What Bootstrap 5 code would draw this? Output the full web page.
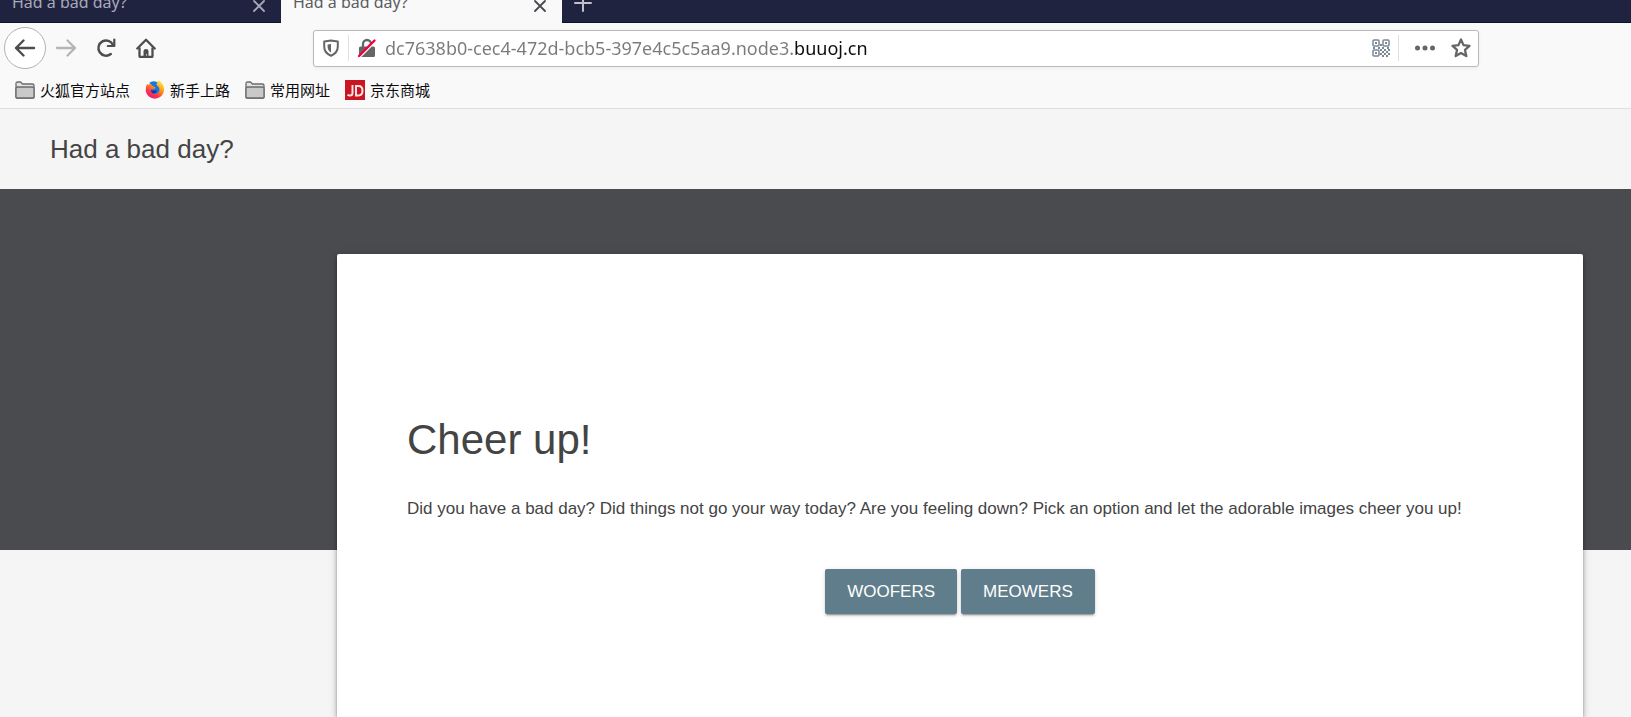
<!DOCTYPE html>
<html lang="en">
<head>
<meta charset="utf-8">
<meta name="viewport" content="width=device-width, initial-scale=1">
<title>Had a bad day?</title>
<link href="https://cdn.jsdelivr.net/npm/bootstrap@5.3.0/dist/css/bootstrap.min.css" rel="stylesheet">
<style>
  body { background: #f5f5f5; font-family: "Liberation Sans", Arial, sans-serif; color: #444; }
  svg { display: block; flex: none; }
  .chrome { background: #f9f9fa; border-bottom: 1px solid #e0e0e1; font-family: "Noto Sans", "Noto Sans CJK SC", sans-serif; }

  /* Tab strip */
  .tabstrip { height: 23px; background: #202340; }
  .tab { width: 281px; padding: 0 16px 10px 12px; color: #a8a9b8; font-size: 16px; line-height: 20px; align-items: flex-end; border-bottom: 1px solid #0f1126; }
  .tab.current { background: #f9f9fa; color: #5c5c61; border-color: #f9f9fa; }
  .tab.current .tab-x { color: #4a4a4f; }
  .tab-x { color: #b8b9c6; }
  .plain { border: 0; background: none; padding: 0; color: inherit; }
  .newtab { color: #c0c1cc; padding: 0 12px 10px; border-bottom: 1px solid #0f1126; align-items: flex-end; }

  /* Toolbar */
  .toolbar { height: 50px; padding: 0 152px 0 4px; }
  .navbtn { width: 40px; height: 40px; color: #4d4d50; }
  .navbtn.back { width: 42px; height: 42px; border: 1px solid #b3b3b5; border-radius: 50%; background: #fff; }
  .navbtn:disabled { color: #b5b5b6; }
  .urlbar { margin-left: 147px; height: 37px; background: #fff; border: 1px solid #b9b9bb; border-radius: 3px; box-shadow: 0 1px 4px rgba(0,0,0,.06); padding: 0 7px 0 8px; color: #666668; }
  .rule { width: 1px; height: 26px; background: #e0e0e2; }
  .address { --host: 409px; min-width: 0; border: 0; outline: 0; padding: 0; height: 33px; font-size: 18px; color: #7a7a7c;
    background: linear-gradient(to right, #7a7a7c var(--host), #0c0c0d var(--host)); background-clip: text; -webkit-background-clip: text; -webkit-text-fill-color: transparent; }

  /* Bookmarks */
  .bookmarks { height: 35px; padding: 0 15px 2px; gap: 15px; font-size: 15px; line-height: 20px; }
  .bookmarks a { color: #0c0c0d; gap: 5px; }

  /* Page */
  .masthead { height: 80px; padding: 0 50px; font-size: 26px; line-height: 32px; }
  .ribbon { height: 361px; background: #4a4b4f; flex: none; }
  .panel { margin: -296px 48px 0 337px; padding: 156px 70px 80px; background: #fff; border-radius: 2px 2px 0 0;
    box-shadow: 0 2px 2px rgba(0,0,0,.14), 0 3px 4px rgba(0,0,0,.2), 0 1px 8px rgba(0,0,0,.22); }
  .panel h1 { font-size: 42px; line-height: 60px; font-weight: 400; margin-bottom: 24px; }
  .panel p { font-size: 17px; line-height: 30px; margin-bottom: 45px; }
  .btn-slate { --bs-btn-color: #fff; --bs-btn-bg: #607d8b; --bs-btn-hover-color: #fff; --bs-btn-hover-bg: #546e7a; --bs-btn-active-bg: #455a64; --bs-btn-active-color: #fff;
    --bs-btn-padding-x: 22px; --bs-btn-padding-y: 0; --bs-btn-font-size: 17px; --bs-btn-line-height: 45px; --bs-btn-border-width: 0; --bs-btn-border-radius: 2px;
    box-shadow: 0 2px 2px rgba(0,0,0,.14), 0 3px 1px -2px rgba(0,0,0,.2), 0 1px 5px rgba(0,0,0,.12); }
</style>
</head>
<body class="d-flex flex-column min-vh-100">

<svg class="d-none" aria-hidden="true">
  <symbol id="cross" viewBox="0 0 12 12"><path d="M1 1l10 10M11 1L1 11" fill="none" stroke="currentColor" stroke-width="1.8" stroke-linecap="round"/></symbol>
  <symbol id="folder" viewBox="0 0 20 18">
    <path d="M1 2.500Q1 1 2.500 1H5.500l2 2h10Q19 3 19 4.500V16q0 1-1 1H2q-1 0-1-1z" fill="#e3e3e4" stroke="#6b6b6b" stroke-width="1.300"/>
    <path d="M1 7.500Q1 6 2.500 6h15Q19 6 19 7.500V16q0 1-1 1H2q-1 0-1-1z" fill="#c9c9ca" stroke="#6b6b6b" stroke-width="1.300"/>
  </symbol>
</svg>

<header class="chrome">
  <div class="tabstrip d-flex overflow-hidden">
    <div class="tab d-flex justify-content-between"><span>Had a bad day?</span>
      <button class="plain tab-x" aria-label="Close tab"><svg width="12" height="12"><use href="#cross"/></svg></button></div>
    <div class="tab current d-flex justify-content-between"><span>Had a bad day?</span>
      <button class="plain tab-x" aria-label="Close tab"><svg width="12" height="12"><use href="#cross"/></svg></button></div>
    <button class="plain newtab d-flex flex-fill" aria-label="New tab"><svg width="18" height="18" viewBox="0 0 18 18"><path d="M9 1v16M1 9h16" stroke="currentColor" stroke-width="2" stroke-linecap="round"/></svg></button>
  </div>

  <div class="toolbar d-flex align-items-center">
    <button class="plain navbtn back d-flex align-items-center justify-content-center" aria-label="Back"><svg width="22" height="20" viewBox="0 0 22 20"><path d="M20 10H2M9.500 2.500L2 10l7.500 7.500" fill="none" stroke="currentColor" stroke-width="2.400" stroke-linecap="round" stroke-linejoin="round"/></svg></button>
    <button class="plain navbtn d-flex align-items-center justify-content-center" disabled aria-label="Forward"><svg width="22" height="20" viewBox="0 0 22 20"><path d="M2 10h18M12.500 2.500L20 10l-7.500 7.500" fill="none" stroke="currentColor" stroke-width="2.300" stroke-linecap="round" stroke-linejoin="round"/></svg></button>
    <button class="plain navbtn d-flex align-items-center justify-content-center" aria-label="Reload"><svg width="20" height="20" viewBox="0 0 20 20"><path d="M14.800 16A7.600 7.600 0 1 1 17 7" fill="none" stroke="currentColor" stroke-width="2.400" stroke-linecap="round"/><path d="M18.300 1.500v6.500h-6.500" fill="none" stroke="currentColor" stroke-width="2.200" stroke-linejoin="round" stroke-linecap="round"/></svg></button>
    <button class="plain navbtn d-flex align-items-center justify-content-center" aria-label="Home"><svg width="20" height="20" viewBox="0 0 20 20"><path d="M1.300 10.500L10 1.800l8.700 8.700" fill="none" stroke="currentColor" stroke-width="2.300" stroke-linecap="round" stroke-linejoin="round"/><path d="M3.500 9.500V18q0 1 1 1h11q1 0 1-1V9.500" fill="none" stroke="currentColor" stroke-width="2.300"/><path d="M7.500 19v-6q0-2 2.500-2t2.500 2v6h-1.800v-3H10v3z" fill="currentColor"/></svg></button>

    <div class="urlbar d-flex align-items-center flex-fill">
      <svg width="18" height="18" viewBox="0 0 18 18" aria-hidden="true"><path d="M9 1.500Q12 2.200 15.800 2.500V7.500q0 6.500-6.800 9.200Q2.200 14 2.200 7.500V2.500Q6 2.200 9 1.500z" fill="none" stroke="currentColor" stroke-width="2" stroke-linejoin="round"/><path d="M9 5v8.500Q5.600 11.500 5.600 7.500V5.500z" fill="currentColor"/></svg>
      <span class="rule mx-2"></span>
      <svg width="20" height="20" viewBox="0 0 20 20" aria-hidden="true"><path d="M6 9V6a4 4 0 0 1 8 0v3" fill="none" stroke="currentColor" stroke-width="2.300"/><rect x="2" y="8.500" width="16" height="10.500" rx="1.500" fill="currentColor"/><path d="M2.600 19.600L19 3.200" stroke="#fff" stroke-width="1.600"/><path d="M2 18L17.500 2.500" stroke="#f5003d" stroke-width="2.400" stroke-linecap="round"/></svg>
      <input class="address flex-fill ms-2" type="text" aria-label="Address" value="dc7638b0-cec4-472d-bcb5-397e4c5c5aa9.node3.buuoj.cn">
      <button class="plain" aria-label="QR code"><svg width="18" height="18" viewBox="0 0 18 18"><g fill="none" stroke="#7a8794" stroke-width="1.500"><rect x="1" y="1" width="6" height="6" rx="1"/><rect x="11" y="1" width="6" height="6" rx="1"/><rect x="1" y="11" width="6" height="6" rx="1"/></g><path fill="#7a8794" d="M3 3h2v2H3zM13 3h2v2h-2zM3 13h2v2H3zM8 5h2v2H8zM1 8h2v2H1zM6 8h2v2H6zM10 8h2v2h-2zM15 8h2v2h-2zM8 10h2v2H8zM12 10h2v2h-2zM10 12h2v2h-2zM14 12h2v2h-2zM8 14h2v2H8zM12 14h2v2h-2zM16 10h2v2h-2zM16 14h2v2h-2zM10 16h2v2h-2zM14 16h2v2h-2z"/></svg></button>
      <span class="rule ms-2 me-3"></span>
      <button class="plain" aria-label="Page actions"><svg width="20" height="20" viewBox="0 0 20 20" fill="currentColor"><circle cx="2.500" cy="10" r="2.500"/><circle cx="10" cy="10" r="2.500"/><circle cx="17.500" cy="10" r="2.500"/></svg></button>
      <button class="plain ms-3" aria-label="Bookmark this page"><svg width="20" height="20" viewBox="0 0 20 20"><path d="M10 1.500l2.500 5.600 6 .7-4.500 4.100 1.300 6.200L10 15l-5.300 3.100L6 11.900 1.500 7.800l6-.7z" fill="none" stroke="currentColor" stroke-width="2.300" stroke-linejoin="round"/></svg></button>
    </div>
  </div>

  <nav class="bookmarks d-flex align-items-center" aria-label="Bookmarks">
    <a href="#" class="d-flex align-items-center text-decoration-none"><svg width="20" height="18"><use href="#folder"/></svg>火狐官方站点</a>
    <a href="#" class="d-flex align-items-center text-decoration-none"><svg width="20" height="20" viewBox="0 0 20 20"><defs><linearGradient id="fx" x1=".85" y1="0" x2=".2" y2="1"><stop offset="0" stop-color="#fff44f"/><stop offset=".4" stop-color="#ff980e"/><stop offset=".7" stop-color="#ff3647"/><stop offset="1" stop-color="#e31587"/></linearGradient></defs><path d="M2 4q1 .3 1.600 1Q5 3 6.500 2.500 6.500 4 8 5L10 2Q13 2 14 .5 19.500 4 19 11A9.300 9.300 0 0 1 .7 11Q.5 7 2 4z" fill="url(#fx)"/><path d="M4 3Q8 0 12.500 2.500 10.500 4 12 5.500q3.500 2.500 2 6-1.500 3-5 2.500Q5.500 13 6 9.500l3.500-.5 1-1.500L7 5.500 6 4z" fill="#1678e8"/><path d="M6 10q2 1.200 3.500.5t2.500.5q-2 3-4.500 2Q6 12 6 10z" fill="#272b8c"/></svg>新手上路</a>
    <a href="#" class="d-flex align-items-center text-decoration-none"><svg width="20" height="18"><use href="#folder"/></svg>常用网址</a>
    <a href="#" class="d-flex align-items-center text-decoration-none"><svg width="20" height="20" viewBox="0 0 20 20"><path fill="#c81623" d="M0 0h20v20H0z"/><g fill="none" stroke="#fbe3e4" stroke-width="2"><path d="M7.500 5v8q0 2.500-2.500 2.500-1.500 0-2.500-.8"/><path d="M11 6h2.500q4 0 4 4.700t-4 4.700H11z"/></g></svg>京东商城</a>
  </nav>
</header>

<div class="masthead d-flex align-items-center">Had a bad day?</div>
<div class="ribbon"></div>
<main class="panel flex-fill">
  <h1>Cheer up!</h1>
  <p>Did you have a bad day? Did things not go your way today? Are you feeling down? Pick an option and let the adorable images cheer you up!</p>
  <form class="d-flex justify-content-center gap-1" onsubmit="return false">
    <button class="btn btn-slate" name="category" value="woofers">WOOFERS</button>
    <button class="btn btn-slate" name="category" value="meowers">MEOWERS</button>
  </form>
</main>

<script src="https://cdn.jsdelivr.net/npm/bootstrap@5.3.0/dist/js/bootstrap.bundle.min.js"></script>
</body>
</html>
